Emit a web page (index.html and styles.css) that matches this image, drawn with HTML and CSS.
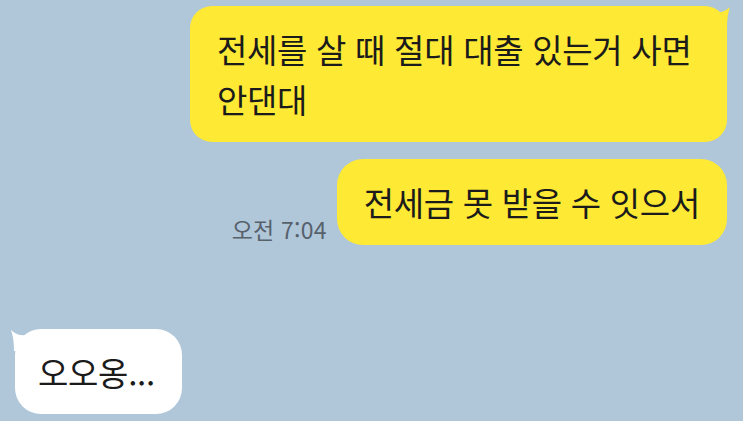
FILE: index.html
```html
<!DOCTYPE html>
<html lang="ko">
<head>
<meta charset="utf-8">
<title>채팅</title>
<link rel="stylesheet" href="styles.css">
</head>
<body>
<main class="chat">
  <div class="row row-me first">
    <div class="bubble me wide">
      전세를 살 때 절대 대출 있는거 사면 안댄대
      <svg class="tail tail-right" viewBox="0 0 24 24" width="24" height="24" aria-hidden="true"><path d="M3 5 Q15 9 23 1 Q20 9 20 22 L3 22 Z" fill="#fee934"/></svg>
    </div>
  </div>
  <div class="row row-me second">
    <span class="time">오전 7:04</span>
    <div class="bubble me">전세금 못 받을 수 잇으서</div>
  </div>
  <div class="row row-other third">
    <div class="bubble other">
      오오옹...
      <svg class="tail tail-left" viewBox="0 0 24 24" width="24" height="24" aria-hidden="true"><path d="M21 5 Q9 9 1 1 Q4 9 4 22 L21 22 Z" fill="#ffffff"/></svg>
    </div>
  </div>
</main>
</body>
</html>
```
FILE: styles.css
```css
html, body {
  margin: 0;
  padding: 0;
}
body {
  background: #b0c6d9;
  width: 743px;
  height: 421px;
  overflow: hidden;
  font-family: "Noto Sans CJK KR", "Noto Sans", sans-serif;
}
.chat {
  display: flex;
  flex-direction: column;
}
.row {
  display: flex;
  align-items: flex-end;
}
.row-me {
  justify-content: flex-end;
  padding-right: 16px;
}
.row-other {
  justify-content: flex-start;
  padding-left: 15px;
}
.first { margin-top: 6px; }
.second { margin-top: 17px; }
.third { margin-top: 84px; }
.bubble {
  position: relative;
  font-size: 33px;
  line-height: 50px;
  color: #1b1b1b;
  padding: 18px 27px 18px 27px;
  border-radius: 26px;
  letter-spacing: -0.3px;
  word-break: keep-all;
}
.me {
  background: #fee934;
}
.wide {
  width: 483px;
  border-radius: 22px;
}
.other {
  background: #ffffff;
  padding: 18px 27px 17px 23px;
}
.time {
  font-size: 23px;
  color: #56616c;
  margin-right: 10px;
  margin-bottom: 3px;
  line-height: 26px;
  letter-spacing: 0.2px;
}
.tail {
  position: absolute;
  top: 0;
}
.tail-right {
  right: -4px;
}
.tail-left {
  left: -5px;
}
```
